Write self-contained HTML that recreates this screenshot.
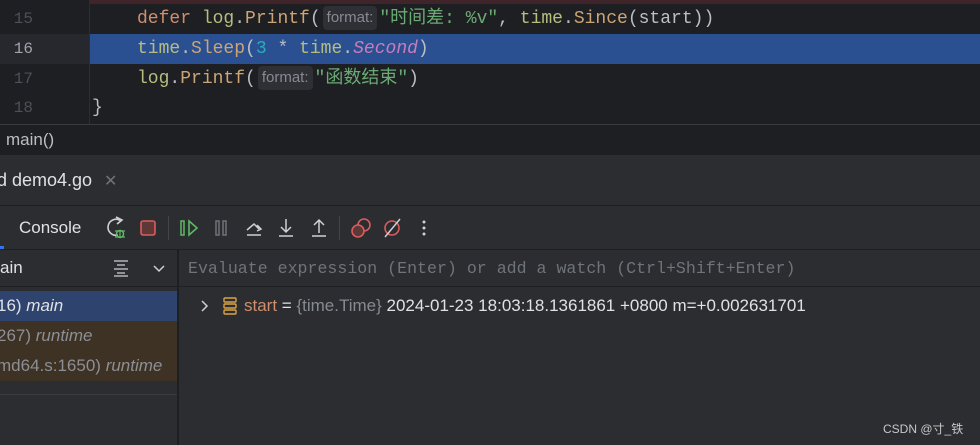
<!DOCTYPE html>
<html><head><meta charset="utf-8"><style>
*{margin:0;padding:0;box-sizing:border-box}
body{width:980px;height:445px;overflow:hidden;background:#2b2d30;position:relative;font-family:"Liberation Sans","Noto Sans CJK SC",sans-serif}
.abs{position:absolute}
.mono{font-family:"Liberation Mono","Noto Sans CJK SC",monospace;font-size:18px;white-space:pre}
.ln{position:absolute;left:0;width:33px;text-align:right;font-family:"Liberation Mono",monospace;font-size:16px;color:#4b5059;line-height:30px}
.code{position:absolute;left:137px;color:#bcbec4;line-height:30px;height:30px}
.kw{color:#cf8e6d}.pk{color:#b7bd7f}.fn{color:#cda574}.st{color:#6aab73}.nu{color:#2aacb8}.pu{color:#c77dbb;font-style:italic}
.hint{display:inline-block;font-family:"Liberation Sans",sans-serif;font-size:15px;color:#868a91;background:#2f3035;border-radius:4px;padding:0 4px;height:24px;line-height:24px;vertical-align:middle;margin:0 2px}
</style></head><body>
<div class="abs" style="left:0;top:0;width:980px;height:124px;background:#1e1f22"></div>
<div class="abs" style="left:90px;top:0;width:890px;height:4px;background:#3f2529"></div>
<div class="abs" style="left:89px;top:0;width:1px;height:124px;background:#2b2d30"></div>
<div class="abs" style="left:0;top:34px;width:89px;height:30px;background:#26282e"></div>
<div class="abs" style="left:90px;top:34px;width:890px;height:30px;background:#2a5091"></div>
<div class="ln" style="top:4px">15</div>
<div class="ln" style="top:34px;color:#a1a3ab">16</div>
<div class="ln" style="top:64px">17</div>
<div class="ln" style="top:93px">18</div>
<div class="code mono" style="top:4px"><span class="kw">defer</span> <span class="pk">log</span>.<span class="fn">Printf</span>(<span class="hint">format:</span><span class="st">"时间差: %v"</span>, <span class="pk">time</span>.<span class="fn">Since</span>(start))</div>
<div class="code mono" style="top:34px"><span class="pk">time</span>.<span class="fn">Sleep</span>(<span class="nu">3</span> * <span class="pk">time</span>.<span class="pu">Second</span>)</div>
<div class="code mono" style="top:64px"><span class="pk">log</span>.<span class="fn">Printf</span>(<span class="hint">format:</span><span class="st">"函数结束"</span>)</div>
<div class="code mono" style="top:93px;left:92px">}</div>
<div class="abs" style="left:0;top:124px;width:980px;height:1px;background:#393b40"></div>
<div class="abs" style="left:0;top:125px;width:980px;height:30px;background:#1e1f22"></div>
<div class="abs" style="left:6px;top:130px;font-size:17px;color:#bcbec4">main()</div>
<div class="abs" style="left:-3px;top:170px;font-size:18px;color:#dfe1e5">d demo4.go</div>
<div class="abs" style="left:104px;top:171px;font-size:16px;color:#6f737a">✕</div>
<div class="abs" style="left:0;top:205px;width:980px;height:1px;background:#1e1f22"></div>
<div class="abs" style="left:19px;top:218px;font-size:17px;color:#dfe1e5">Console</div>
<div class="abs" style="left:0;top:246px;width:4px;height:3px;background:#3574f0"></div>
<svg class="abs" style="left:100px;top:210px" width="340" height="36" viewBox="0 0 340 36">
<path d="M21 11 A8 8 0 1 0 18 25" fill="none" stroke="#ced0d6" stroke-width="1.6"/><path d="M16 7 L22 10 L17 14" fill="none" stroke="#ced0d6" stroke-width="1.6"/>
<circle cx="20" cy="24" r="3.5" fill="none" stroke="#5fb865" stroke-width="1.5"/><path d="M15 21h10M15 27h10M20 20v8" stroke="#5fb865" stroke-width="1.2"/>
<rect x="41" y="11" width="14" height="14" rx="2" fill="#5e3838" stroke="#db5c5c" stroke-width="1.6"/>
<line x1="68.5" y1="6" x2="68.5" y2="30" stroke="#43454a"/>
<rect x="81" y="11" width="3" height="14" fill="none" stroke="#5fb865" stroke-width="1.5"/><path d="M89 11 L97 18 L89 25 Z" fill="none" stroke="#5fb865" stroke-width="1.6"/>
<rect x="116" y="11" width="3" height="14" fill="none" stroke="#6f737a" stroke-width="1.5"/><rect x="123" y="11" width="3" height="14" fill="none" stroke="#6f737a" stroke-width="1.5"/>
<path d="M147 20 L154 14 L159 19 M157 15 L161 19 L157 21 M147 25 H161" fill="none" stroke="#ced0d6" stroke-width="1.5"/>
<path d="M186 9 V21 M181 17 L186 22 L191 17 M179 26 H193" fill="none" stroke="#ced0d6" stroke-width="1.5"/>
<path d="M219 23 V11 M214 15 L219 10 L224 15 M212 26 H226" fill="none" stroke="#ced0d6" stroke-width="1.5"/>
<line x1="239.5" y1="6" x2="239.5" y2="30" stroke="#43454a"/>
<circle cx="264" cy="15" r="6" fill="none" stroke="#db5c5c" stroke-width="1.6"/><circle cx="258" cy="21" r="6" fill="#5e3838" stroke="#db5c5c" stroke-width="1.6"/>
<circle cx="292" cy="18" r="7" fill="none" stroke="#db5c5c" stroke-width="1.6"/><line x1="285" y1="27" x2="300" y2="9" stroke="#ced0d6" stroke-width="1.5"/>
<circle cx="324" cy="12" r="1.5" fill="#ced0d6"/><circle cx="324" cy="18" r="1.5" fill="#ced0d6"/><circle cx="324" cy="24" r="1.5" fill="#ced0d6"/>
</svg>
<div class="abs" style="left:0;top:249px;width:980px;height:1px;background:#1e1f22"></div>
<div class="abs" style="left:177px;top:250px;width:2px;height:195px;background:#1e1f22"></div>
<div class="abs" style="left:0;top:258px;font-size:17px;color:#dfe1e5">ain</div>
<svg class="abs" style="left:112px;top:258px" width="60" height="20"><path d="M2 3h14M5 7h8M2 11h14M5 15h8M2 18h14" stroke="#ced0d6" stroke-width="1.3"/><path d="M42 8 L47 13 L52 8" fill="none" stroke="#ced0d6" stroke-width="1.5"/></svg>
<div class="abs" style="left:0;top:286px;width:177px;height:1px;background:#1e1f22"></div>
<div class="abs" style="left:179px;top:286px;width:801px;height:1px;background:#1e1f22"></div>
<div class="abs mono" style="left:188px;top:259px;font-size:16.6px;color:#6f737a">Evaluate expression (Enter) or add a watch (Ctrl+Shift+Enter)</div>
<div class="abs" style="left:0;top:291px;width:177px;height:30px;background:#2e436e"></div>
<div class="abs" style="left:0;top:321px;width:177px;height:60px;background:#3d3223"></div>
<div class="abs" style="left:-3px;top:296px;font-size:17px;color:#dfe1e5">16) <i>main</i></div>
<div class="abs" style="left:-3px;top:326px;font-size:17px;color:#8c8f96">267) <i>runtime</i></div>
<div class="abs" style="left:-3px;top:356px;font-size:17px;color:#8c8f96">md64.s:1650) <i>runtime</i></div>
<div class="abs" style="left:0;top:394px;width:177px;height:1px;background:#393b40"></div>
<svg class="abs" style="left:196px;top:296px" width="45" height="22"><path d="M6 5 L11 10 L6 15" fill="none" stroke="#ced0d6" stroke-width="1.5"/><rect x="28" y="2" width="12" height="4" rx="1" fill="none" stroke="#d9a343" stroke-width="1.4"/><rect x="28" y="8" width="12" height="4" rx="1" fill="none" stroke="#d9a343" stroke-width="1.4"/><rect x="28" y="14" width="12" height="4" rx="1" fill="none" stroke="#d9a343" stroke-width="1.4"/></svg>
<div class="abs" style="left:244px;top:296px;font-size:17px;color:#dfe1e5;white-space:pre"><span style="color:#cf8e6d">start</span> = <span style="color:#868a91">{time.Time}</span> 2024-01-23 18:03:18.1361861 +0800 m=+0.002631701</div>
<div class="abs" style="left:883px;top:420px;font-size:12px;color:#c8c8c8">CSDN @寸_铁</div>
</body></html>
